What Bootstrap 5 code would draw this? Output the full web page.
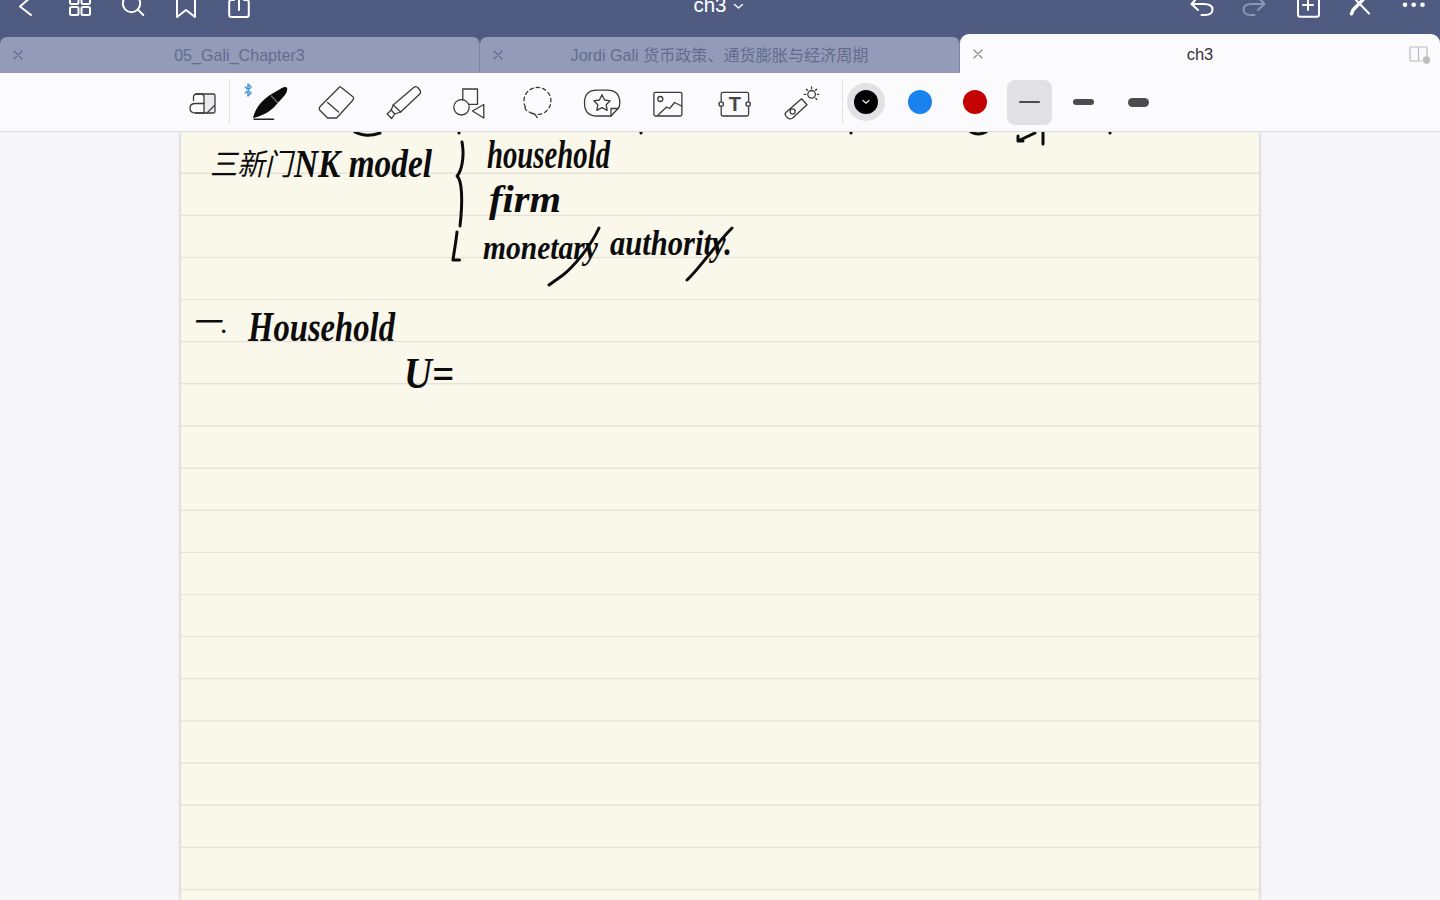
<!doctype html>
<html lang="zh">
<head>
<meta charset="utf-8">
<title>ch3</title>
<link rel="stylesheet" href="https://cdn.jsdelivr.net/npm/bootstrap@5.3.0/dist/css/bootstrap.min.css">
<style>
html,body{height:100%;}
body{background:#f7f6fb;font-family:"Liberation Sans","Noto Sans CJK SC",sans-serif;overflow:hidden;}
.app-shell{height:900px;}
.top-strip{height:34px;background:#4f5b80;}
.top-slot{width:53px;height:34px;flex:none;}
.top-slot svg,.tool-slot svg{display:block;}
.top-ink{fill:none;stroke:#fff;stroke-width:2;stroke-linecap:round;stroke-linejoin:round;}
.side-group{width:265px;flex:none;}
.doc-title{color:#fff;font-size:20.5px;font-weight:500;line-height:20px;margin-top:-5px;gap:6px;padding-right:3px;}
.tab-strip{height:39px;background:#4f5b80;}
.doc-tab{height:36px;width:480px;flex:none;background:#939bb9;color:#646c8c;font-size:16.1px;border-right:1px solid #7d85a6;border-radius:7px 7px 0 0;}
.doc-tab-on{height:39px;background:#fbfafd;color:#333;border-right:0;border-radius:9px 9px 0 0;font-size:16.5px;padding-top:1px;}
.tab-x{left:12px;top:50%;margin-top:-6px;width:12px;height:12px;}
.tab-panel{right:8px;top:11px;}
.tool-strip{height:59px;background:#fbfafd;border-bottom:1px solid #dcdbde;padding-left:176px;}
.tool-slot{width:66.4px;height:58px;flex:none;}
.tool-first{width:53px;}
.tool-ink{fill:none;stroke:#3b3b3f;stroke-width:1.3;stroke-linecap:round;stroke-linejoin:round;}
.tool-rule{width:1px;height:46px;background:#e4e3e8;flex:none;}
.tool-rule-a{margin-right:5px;}
.tool-rule-b{margin-left:9px;margin-right:4px;}
.ink-ring{width:38px;height:38px;background:#e2e1e4;flex:none;}
.ink-dot{width:24px;height:24px;flex:none;}
.ink-black{background:#000;}
.ink-blue{background:#1a82ee;margin-left:23px;}
.ink-red{background:#c40202;margin-left:31px;}
.size-slot{width:45px;height:45px;flex:none;border-radius:8px;}
.size-on{background:#e1e0e5;margin-left:20px;}
.size-next{margin-left:9.5px;}
.size-bar{width:21px;background:#4b4b50;border-radius:5px;}
.sheet-wrap{height:768px;}
.sheet{width:1078px;height:768px;background-color:#faf7eb;background-image:repeating-linear-gradient(to bottom,transparent 0,transparent 40.2px,#e4e1d8 40.9px,#e4e1d8 41.5px,transparent 42.13px);box-shadow:0 0 4px rgba(0,0,0,.28);}
.sheet svg{display:block;}
.hand{font-family:"Liberation Serif","Noto Sans CJK SC",serif;font-style:italic;font-weight:700;fill:#0c0c0c;}
.hand-ink{fill:none;stroke:#0c0c0c;stroke-width:3;stroke-linecap:round;stroke-linejoin:round;}
</style>
</head>
<body>
<div class="app-shell d-flex flex-column overflow-hidden">

  <header class="top-strip d-flex">
    <div class="side-group d-flex">
      <div class="top-slot"><svg width="53" height="34" viewBox="0 0 53 34"><path class="top-ink" d="M31 -3L20 6.5L31 15"/></svg></div>
      <div class="top-slot"><svg width="53" height="34" viewBox="53 0 53 34"><g class="top-ink"><rect x="70" y="-6" width="8.5" height="10" rx="1.5"/><rect x="81.5" y="-6" width="8.5" height="10" rx="1.5"/><rect x="70" y="7" width="8.5" height="8" rx="1.5"/><rect x="81.5" y="7" width="8.5" height="8" rx="1.5"/></g></svg></div>
      <div class="top-slot"><svg width="53" height="34" viewBox="106 0 53 34"><g class="top-ink"><circle cx="131.5" cy="3.5" r="8.7"/><path d="M137.8 9.6L143.3 15"/></g></svg></div>
      <div class="top-slot"><svg width="53" height="34" viewBox="159 0 53 34"><path class="top-ink" d="M177 -5V17L186 10L195 17V-5"/></svg></div>
      <div class="top-slot"><svg width="53" height="34" viewBox="212 0 53 34"><g class="top-ink"><path d="M234 0H231.5Q229.2 0 229.2 2.3V14.7Q229.2 17 231.5 17H246.5Q248.8 17 248.8 14.7V2.3Q248.8 0 246.5 0H244"/><path d="M239 10V-5"/></g></svg></div>
    </div>
    <div class="doc-title flex-fill d-flex justify-content-center align-items-start">
      <span>ch3</span>
      <svg class="mt-2" width="11" height="8" viewBox="0 0 11 8"><path d="M1.5 1.5L5.5 5L9.5 1.5" fill="none" stroke="#fff" stroke-width="1.4" stroke-linecap="round" stroke-linejoin="round"/></svg>
    </div>
    <div class="side-group d-flex">
      <div class="top-slot"><svg width="53" height="34" viewBox="1175 0 53 34"><g class="top-ink"><path d="M1197.5 -2.5L1191.5 4L1198 10"/><path d="M1192 4H1204Q1212.5 4 1212.5 9.5Q1212.5 15 1205 15H1201.5"/></g></svg></div>
      <div class="top-slot"><svg width="53" height="34" viewBox="1228 0 53 34"><g class="top-ink" style="stroke:#8d96b4"><path d="M1258.5 -2.5L1264.5 4L1258 10"/><path d="M1264 4H1252Q1243.5 4 1243.5 9.5Q1243.5 15 1251 15H1254.5"/></g></svg></div>
      <div class="top-slot"><svg width="53" height="34" viewBox="1281 0 53 34"><g class="top-ink"><rect x="1298" y="-8" width="21" height="24.8" rx="2.2"/><path d="M1308 0V10M1303 5H1313"/></g></svg></div>
      <div class="top-slot"><svg width="53" height="34" viewBox="1334 0 53 34"><g class="top-ink"><path d="M1354 -2L1369 13.500"/><path d="M1351.500 13.800L1353 10L1365.500 -3" stroke-width="3.400"/></g></svg></div>
      <div class="top-slot"><svg width="53" height="34" viewBox="1387 0 53 34"><g fill="#fff"><circle cx="1405" cy="4.7" r="2.3"/><circle cx="1413.7" cy="4.7" r="2.3"/><circle cx="1422.5" cy="4.7" r="2.3"/></g></svg></div>
    </div>
  </header>

  <nav class="tab-strip d-flex align-items-end">
    <div class="doc-tab position-relative d-flex align-items-center justify-content-center">
      <svg class="tab-x position-absolute" viewBox="0 0 12 12"><path d="M2 2L10 10M10 2L2 10" stroke="#646c8c" stroke-width="1.2" stroke-linecap="round"/></svg>
      <span>05_Gali_Chapter3</span>
    </div>
    <div class="doc-tab position-relative d-flex align-items-center justify-content-center">
      <svg class="tab-x position-absolute" viewBox="0 0 12 12"><path d="M2 2L10 10M10 2L2 10" stroke="#646c8c" stroke-width="1.2" stroke-linecap="round"/></svg>
      <span>Jordi Gali 货币政策、通货膨胀与经济周期</span>
    </div>
    <div class="doc-tab doc-tab-on position-relative d-flex align-items-center justify-content-center">
      <svg class="tab-x position-absolute" viewBox="0 0 12 12"><path d="M2 2L10 10M10 2L2 10" stroke="#8b8b90" stroke-width="1.2" stroke-linecap="round"/></svg>
      <span>ch3</span>
      <svg class="tab-panel position-absolute" width="24" height="20" viewBox="0 0 24 20"><path d="M19 12V3Q19 2 18 2H3Q2 2 2 3V15Q2 16 3 16H14M10.500 2V16" fill="none" stroke="#b9b9be" stroke-width="1.2"/><circle cx="18.500" cy="15" r="3.700" fill="#bcbcc1"/></svg>
    </div>
  </nav>

  <div class="tool-strip d-flex align-items-center position-relative">
    <div class="tool-slot tool-first"><svg width="53" height="58" viewBox="176 73 53 58"><path d="M204 94.500H214.500V112.500H204Z" fill="#ebebee"/><g class="tool-ink"><path d="M196 94H213.500Q215 94 215 95.500V111.500Q215 113 213.500 113H196"/><path d="M207 113L214.500 105.500"/><path d="M193.500 100.500V97Q193.500 94 197 94H201Q204 94 204 97V113"/><path d="M204 103.500H195.500Q190 103.500 190 108.200Q190 113 195.500 113H204"/></g></svg></div>
    <span class="tool-rule tool-rule-a"></span>
    <div class="tool-slot"><svg width="66.400" height="58" viewBox="235 73 66.400 58">
      <path d="M245 86.500L251 93L248 96V84L251 87L245 93.500" fill="none" stroke="#4a9ad6" stroke-width="1.600" stroke-linejoin="round"/>
      <path d="M253 118C255 109 261 101 270 95L281 88.500Q286 86 287 88Q288 91 285 95L276 105C270 112 262 116 253 118Z" fill="#0b0b0d"/>
      <path d="M271 95.500L278 103" stroke="#7b7b80" stroke-width="1.100" fill="none"/>
      <path d="M254 119.200H273.500" stroke="#222" stroke-width="1.500" stroke-linecap="round"/>
    </svg></div>
    <div class="tool-slot"><svg width="66.400" height="58" viewBox="301.400 73 66.400 58"><g class="tool-ink"><path d="M341 87L353 96.500Q355 98 353 100.500L337 118H328L320 110Q319 108 320.500 106.500L339 88Q340 86 341 87Z"/><path d="M328 102.500L339 112"/></g></svg></div>
    <div class="tool-slot"><svg width="66.400" height="58" viewBox="367.800 73 66.400 58"><g class="tool-ink"><path d="M413.500 87.500Q416 85.500 418 88L420 90.500Q421 92.500 419.500 94L400.500 112L393 105Z"/><path d="M393 105L391 110L394.500 114L400.500 112"/><path d="M391 110L387 114L391.500 118.500L394.500 114"/></g></svg></div>
    <div class="tool-slot"><svg width="66.400" height="58" viewBox="434.200 73 66.400 58"><g class="tool-ink"><path d="M463 100V89H477.700V104.300H469"/><circle cx="461.700" cy="107.300" r="7.700"/><path d="M484 104.500L472.700 111L484 118Z"/></g></svg></div>
    <div class="tool-slot"><svg width="66.400" height="58" viewBox="500.600 73 66.400 58"><g class="tool-ink"><path d="M525 107A13.500 13.500 0 1 1 531 113" stroke-dasharray="3.500 3"/><path d="M524.500 107.500C525 113 535 112.500 537 118" stroke-dasharray="3.500 3"/></g></svg></div>
    <div class="tool-slot"><svg width="66.400" height="58" viewBox="567 73 66.400 58"><g class="tool-ink"><path d="M611 116H597Q584.500 116 584.500 103Q584.500 90.200 597 90.200H607Q619.800 90.200 619.800 103Q619.800 107 618 108.500Z"/><path d="M618 108.500H611V116"/><path d="M602 94.800L604.600 100L610.200 100.800L606.200 104.800L607.200 110.300L602 107.700L596.800 110.300L597.800 104.800L593.800 100.800L599.400 100Z"/></g></svg></div>
    <div class="tool-slot"><svg width="66.400" height="58" viewBox="633.400 73 66.400 58"><g class="tool-ink"><rect x="654.300" y="92.300" width="28" height="23.700" rx="1.500"/><circle cx="660.700" cy="99" r="2.500"/><path d="M658.500 115L667 107L670 108.500L675 102.500L682 106"/></g></svg></div>
    <div class="tool-slot"><svg width="66.400" height="58" viewBox="699.800 73 66.400 58"><g class="tool-ink"><path d="M721 101V94Q721 92.300 722.700 92.300H746.700Q748.400 92.300 748.400 94V101M721 107V114.300Q721 116 722.700 116H746.700Q748.400 116 748.400 114.300V107"/><circle cx="721" cy="104" r="2.200"/><circle cx="748" cy="104" r="2.200"/></g><text x="734.700" y="111" text-anchor="middle" font-family="Liberation Sans" font-weight="700" font-size="20" fill="#45454a">T</text></svg></div>
    <div class="tool-slot"><svg width="66.400" height="58" viewBox="766.200 73 66.400 58"><g class="tool-ink"><path d="M788.300 118.300L785.800 115.600Q784.600 113.800 786.300 112.200L801.800 98.800L807.200 104.800L792.500 118.200Q790 119.600 788.300 118.300Z"/><circle cx="792.800" cy="111.400" r="2.500"/><circle cx="811.800" cy="94.300" r="3.800"/><path d="M811.800 87V88.500M804.500 94.300H806M817.500 94.300H819M806.700 89.200L807.700 90.200M816 98.500L817 99.500M816.900 89.200L815.900 90.200"/></g></svg></div>
    <span class="tool-rule tool-rule-b"></span>
    <div class="ink-ring rounded-circle d-flex align-items-center justify-content-center">
      <div class="ink-dot ink-black rounded-circle d-flex align-items-center justify-content-center"><svg width="8" height="6" viewBox="0 0 8 6"><path d="M1 1.500L4 4.200L7 1.500" fill="none" stroke="#eee" stroke-width="1.300" stroke-linecap="round"/></svg></div>
    </div>
    <div class="ink-dot ink-blue rounded-circle"></div>
    <div class="ink-dot ink-red rounded-circle"></div>
    <div class="size-slot size-on d-flex align-items-center justify-content-center"><div class="size-bar" style="height:2px"></div></div>
    <div class="size-slot size-next d-flex align-items-center justify-content-center"><div class="size-bar" style="height:6px"></div></div>
    <div class="size-slot size-next d-flex align-items-center justify-content-center"><div class="size-bar" style="height:9px"></div></div>
  </div>

  <main class="sheet-wrap d-flex justify-content-center">
    <div class="sheet">
      <svg width="1078" height="768" viewBox="181 132 1078 768">
        <g class="hand">
          <text x="210" y="175" font-size="30" textLength="82" lengthAdjust="spacingAndGlyphs" font-weight="400">三新门</text>
          <text x="294" y="177" font-size="40" textLength="138" lengthAdjust="spacingAndGlyphs">NK model</text>
          <text x="487" y="168" font-size="40" textLength="123" lengthAdjust="spacingAndGlyphs">household</text>
          <text x="489" y="212" font-size="38" textLength="72" lengthAdjust="spacingAndGlyphs">firm</text>
          <text x="483" y="259" font-size="34" textLength="115" lengthAdjust="spacingAndGlyphs">monetary</text>
          <text x="610" y="255" font-size="36" textLength="122" lengthAdjust="spacingAndGlyphs">authority.</text>
          <text x="192" y="333" font-size="30" textLength="36" lengthAdjust="spacingAndGlyphs" font-weight="400">一.</text>
          <text x="248" y="341" font-size="42" textLength="147" lengthAdjust="spacingAndGlyphs">Household</text>
          <text x="404" y="388" font-size="44" textLength="50" lengthAdjust="spacingAndGlyphs">U=</text>
        </g>
        <g class="hand-ink">
          <path d="M462 142C465 158 461 172 457 176C462 180 463 200 460 226"/>
          <path d="M457 232C456 242 454 252 453 260H459.500"/>
          <path d="M599 228C590 248 572 268 563 275L549 285"/>
          <path d="M732 228C715 245 700 268 687 280"/>
          <path d="M355 132Q366 138 380 133"/>
          <path d="M971 132Q978 136 986 132"/>
          <path d="M1035 133L1018 141M1018 136V141H1023"/>
          <path d="M1043 132V144"/>
          <path d="M459 132V133M641 132V133M851 132V133M1110 132V133"/>
        </g>
      </svg>
    </div>
  </main>
</div>
<script src="https://cdn.jsdelivr.net/npm/bootstrap@5.3.0/dist/js/bootstrap.bundle.min.js"></script>
</body>
</html>
